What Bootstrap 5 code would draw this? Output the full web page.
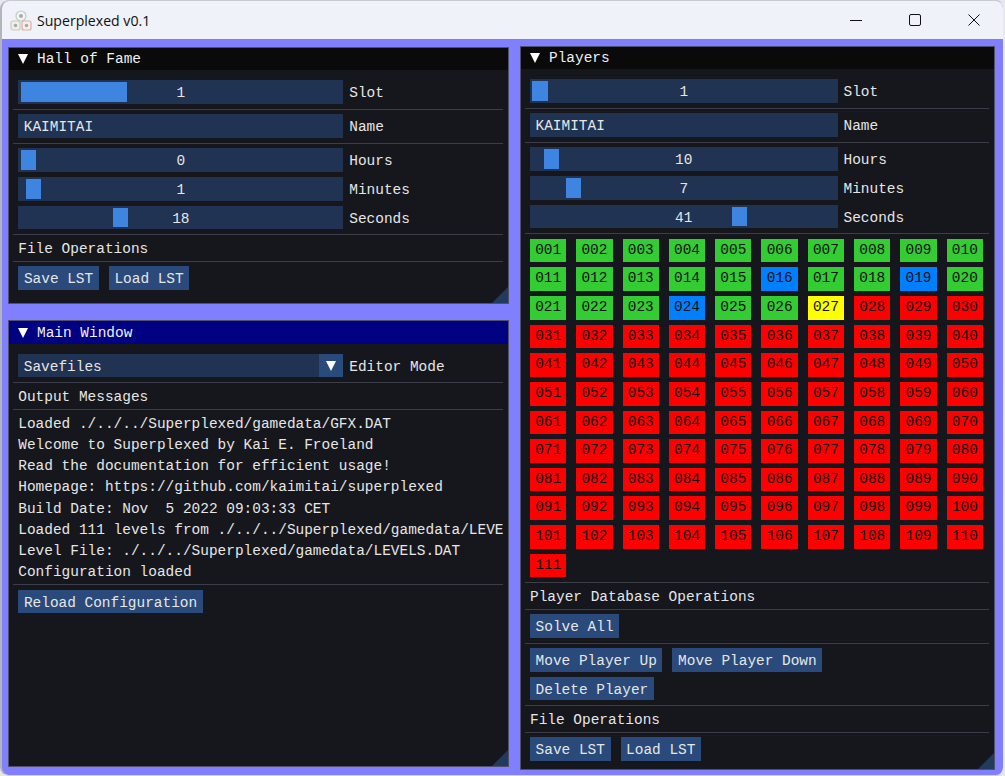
<!DOCTYPE html>
<html lang="en">
<head>
  <meta charset="UTF-8" />
  <title>Superplexed v0.1</title>
  <link rel="stylesheet" href="https://cdn.jsdelivr.net/npm/bootstrap@5.3.0/dist/css/bootstrap.min.css" />
  <style>
    html, body { height: 100%; background: #e6e7ec; overflow: hidden; }
    .app-frame { height: 776px; border-radius: 9px; overflow: hidden; background: #8080ff; border-style: solid; border-width: 1px 2px 1px 2px; border-color: #c9cbd2 #e8e9ee #d4d5dc #b4b5bb; }
    .title-bar { height: 38px; background: #eff2f9; color: #111; font: 14.1px "Open Sans", sans-serif; padding-left: 8px; }
    .title-bar svg.app-logo { margin-right: 5px; }
    .win-btn { width: 59px; height: 38px; }
    .desk { height: 736px; padding-left: 6px; gap: 11.5px; }
    .left-col { width: 500.5px; padding-top: 7.5px; gap: 16.4px; }
    .right-col { width: 475px; padding-top: 6.5px; padding-bottom: 5.5px; }
    .im-win { position: relative; background: #15171d; border: 1px solid #50506a; color: #e6e6e6; font: 14.45px/1 "Liberation Mono", monospace; overflow: hidden; }
    .im-head { height: 22.8px; background: #0a0a0a; padding: 1px 0 0 9px; gap: 9px; color: #f0f0f0; }
    .im-head.active { background: #000082; }
    .tri { width: 0; height: 0; border-left: 5.5px solid transparent; border-right: 5.5px solid transparent; border-top: 10px solid #fff; }
    .im-body { padding: 10px 5px 13px 4px; }
    .left-col .im-body { padding-left: 4.3px; }
    .im-row { margin-left: 5px; height: 23.67px; line-height: 26px; white-space: nowrap; }
    .im-row + .im-row { margin-top: 5px; }
    .im-sep { height: 1px; background: #3d3d49; margin: 5px 0 4.33px; }
    .im-text { margin-left: 5px; height: 16px; line-height: 18.5px; white-space: nowrap; }
    .im-field { position: relative; width: 325px; height: 100%; background: #203352; margin-right: 6px; text-align: center; flex: none; }
    .narrow .im-field { width: 307.5px; }
    .im-field.is-text { text-align: left; padding-left: 5.5px; }
    .grab { position: absolute; top: 2px; bottom: 2px; background: #3d85e0; }
    .im-field span { position: relative; }
    .combo-arrow { position: absolute; right: 0; top: 0; bottom: 0; width: 24px; background: #294a7a; }
    .im-btn { background: #294a7a; color: #e6e6e6; height: 23.67px; padding: 0 5.6px; white-space: nowrap; }
    .btn-row { gap: 10px; }
    .log-box { height: 170.2px; margin-top: -.5px; margin-bottom: -4.5px; padding-left: 5px; overflow: hidden; white-space: nowrap; }
    .log-box div { height: 21.27px; line-height: 21.27px; }
    .levels { display: grid; grid-template-columns: repeat(10, 36.3px); column-gap: 10px; row-gap: 5px; margin-left: 5px; }
    .lvl { height: 23.67px; line-height: 23.67px; text-align: center; color: #111; }
    .lvl-green { background: #33cc33; }
    .lvl-blue { background: #0080ff; }
    .lvl-yellow { background: #ffff00; }
    .lvl-red { background: #ff0000; }
    .grip { position: absolute; right: 0; bottom: 0; width: 0; height: 0; border-left: 16px solid transparent; border-bottom: 16px solid #223a5c; }
  </style>
</head>
<body>
  <div class="app-frame">
    <!-- title bar -->
    <div class="title-bar d-flex align-items-center">
      <svg class="app-logo" width="22" height="22" viewBox="0 0 22 22" fill="none" stroke-width="1.2">
        <circle cx="11" cy="7" r="5" fill="#f4f4f6" stroke="#b9d2bc"/>
        <rect x="1" y="12" width="9" height="9" rx="2" fill="#efeff0" stroke="#d4c8ae"/>
        <rect x="12" y="12" width="9" height="9" rx="2" fill="#f4f0f0" stroke="#e8aaa4"/>
        <circle cx="11" cy="7" r="2" fill="#a8a8ae"/>
        <circle cx="5.5" cy="16.5" r="1.8" fill="#a8a8ae"/>
        <circle cx="16.5" cy="16.5" r="1.8" fill="#a8a8ae"/>
      </svg>
      <span>Superplexed v0.1</span>
      <div class="ms-auto d-flex">
        <div class="win-btn d-flex align-items-center justify-content-center">
          <svg width="12" height="12" viewBox="0 0 12 12"><path d="M0 6.5H12" stroke="#111" stroke-width="1"/></svg>
        </div>
        <div class="win-btn d-flex align-items-center justify-content-center">
          <svg width="12" height="12" viewBox="0 0 12 12" fill="none"><rect x=".5" y=".5" width="11" height="11" rx="1.5" stroke="#111"/></svg>
        </div>
        <div class="win-btn d-flex align-items-center justify-content-center">
          <svg width="12" height="12" viewBox="0 0 12 12" fill="none"><path d="M.5.5l11 11M11.5.5l-11 11" stroke="#111"/></svg>
        </div>
      </div>
    </div>

    <div class="desk d-flex">
      <div class="left-col d-flex flex-column">
        <!-- Hall of Fame -->
        <div class="im-win">
          <div class="im-head d-flex align-items-center"><i class="tri"></i>Hall of Fame</div>
          <div class="im-body">
            <div class="im-row d-flex"><div class="im-field"><div class="grab" style="left:3px;width:106px"></div><span>1</span></div>Slot</div>
            <div class="im-sep"></div>
            <div class="im-row d-flex"><div class="im-field is-text">KAIMITAI</div>Name</div>
            <div class="im-sep"></div>
            <div class="im-row d-flex"><div class="im-field"><div class="grab" style="left:3px;width:15px"></div><span>0</span></div>Hours</div>
            <div class="im-row d-flex"><div class="im-field"><div class="grab" style="left:8px;width:15px"></div><span>1</span></div>Minutes</div>
            <div class="im-row d-flex"><div class="im-field"><div class="grab" style="left:95px;width:15px"></div><span>18</span></div>Seconds</div>
            <div class="im-sep"></div>
            <div class="im-text">File Operations</div>
            <div class="im-sep"></div>
            <div class="im-row d-flex btn-row"><div class="im-btn">Save LST</div><div class="im-btn">Load LST</div></div>
          </div>
          <div class="grip"></div>
        </div>

        <!-- Main Window -->
        <div class="im-win flex-grow-1 mb-2">
          <div class="im-head active d-flex align-items-center"><i class="tri"></i>Main Window</div>
          <div class="im-body">
            <div class="im-row d-flex"><div class="im-field is-text">Savefiles<div class="combo-arrow d-flex align-items-center justify-content-center"><i class="tri"></i></div></div>Editor Mode</div>
            <div class="im-sep"></div>
            <div class="im-text">Output Messages</div>
            <div class="im-sep"></div>
            <div class="log-box">
              <div>Loaded ./../../Superplexed/gamedata/GFX.DAT</div>
              <div>Welcome to Superplexed by Kai E. Froeland</div>
              <div>Read the documentation for efficient usage!</div>
              <div>Homepage: https://github.com/kaimitai/superplexed</div>
              <div>Build Date: Nov&nbsp; 5 2022 09:03:33 CET</div>
              <div>Loaded 111 levels from ./../../Superplexed/gamedata/LEVELS.DAT</div>
              <div>Level File: ./../../Superplexed/gamedata/LEVELS.DAT</div>
              <div>Configuration loaded</div>
            </div>
            <div class="im-sep"></div>
            <div class="im-row d-flex"><div class="im-btn">Reload Configuration</div></div>
          </div>
          <div class="grip"></div>
        </div>
      </div>

      <div class="right-col d-flex flex-column">
        <!-- Players -->
        <div class="im-win narrow flex-grow-1">
          <div class="im-head d-flex align-items-center"><i class="tri"></i>Players</div>
          <div class="im-body">
            <div class="im-row d-flex"><div class="im-field"><div class="grab" style="left:2px;width:15.5px"></div><span>1</span></div>Slot</div>
            <div class="im-sep"></div>
            <div class="im-row d-flex"><div class="im-field is-text">KAIMITAI</div>Name</div>
            <div class="im-sep"></div>
            <div class="im-row d-flex"><div class="im-field"><div class="grab" style="left:13.7px;width:15.3px"></div><span>10</span></div>Hours</div>
            <div class="im-row d-flex"><div class="im-field"><div class="grab" style="left:36px;width:15.3px"></div><span>7</span></div>Minutes</div>
            <div class="im-row d-flex"><div class="im-field"><div class="grab" style="left:202px;width:15.3px"></div><span>41</span></div>Seconds</div>
            <div class="im-sep"></div>
            <div id="levelGrid" class="levels"></div>
            <div class="im-sep"></div>
            <div class="im-text">Player Database Operations</div>
            <div class="im-sep"></div>
            <div class="im-row d-flex btn-row"><div class="im-btn">Solve All</div></div>
            <div class="im-sep"></div>
            <div class="im-row d-flex btn-row"><div class="im-btn">Move Player Up</div><div class="im-btn">Move Player Down</div></div>
            <div class="im-row d-flex btn-row"><div class="im-btn">Delete Player</div></div>
            <div class="im-sep"></div>
            <div class="im-text">File Operations</div>
            <div class="im-sep"></div>
            <div class="im-row d-flex btn-row"><div class="im-btn">Save LST</div><div class="im-btn">Load LST</div></div>
          </div>
          <div class="grip"></div>
        </div>
      </div>
    </div>
  </div>

  <script src="https://cdn.jsdelivr.net/npm/bootstrap@5.3.0/dist/js/bootstrap.bundle.min.js"></script>
  <script>
    // level states: solved green, skipped blue, current yellow, rest red
    const levelGrid = document.getElementById("levelGrid");
    for (let i = 1; i <= 111; i++) {
      const cell = document.createElement("div");
      let state = "lvl-red";
      if (i === 16 || i === 19 || i === 24) state = "lvl-blue";
      else if (i === 27) state = "lvl-yellow";
      else if (i < 27) state = "lvl-green";
      cell.className = "lvl " + state;
      cell.textContent = String(i).padStart(3, "0");
      levelGrid.appendChild(cell);
    }
  </script>
</body>
</html>
